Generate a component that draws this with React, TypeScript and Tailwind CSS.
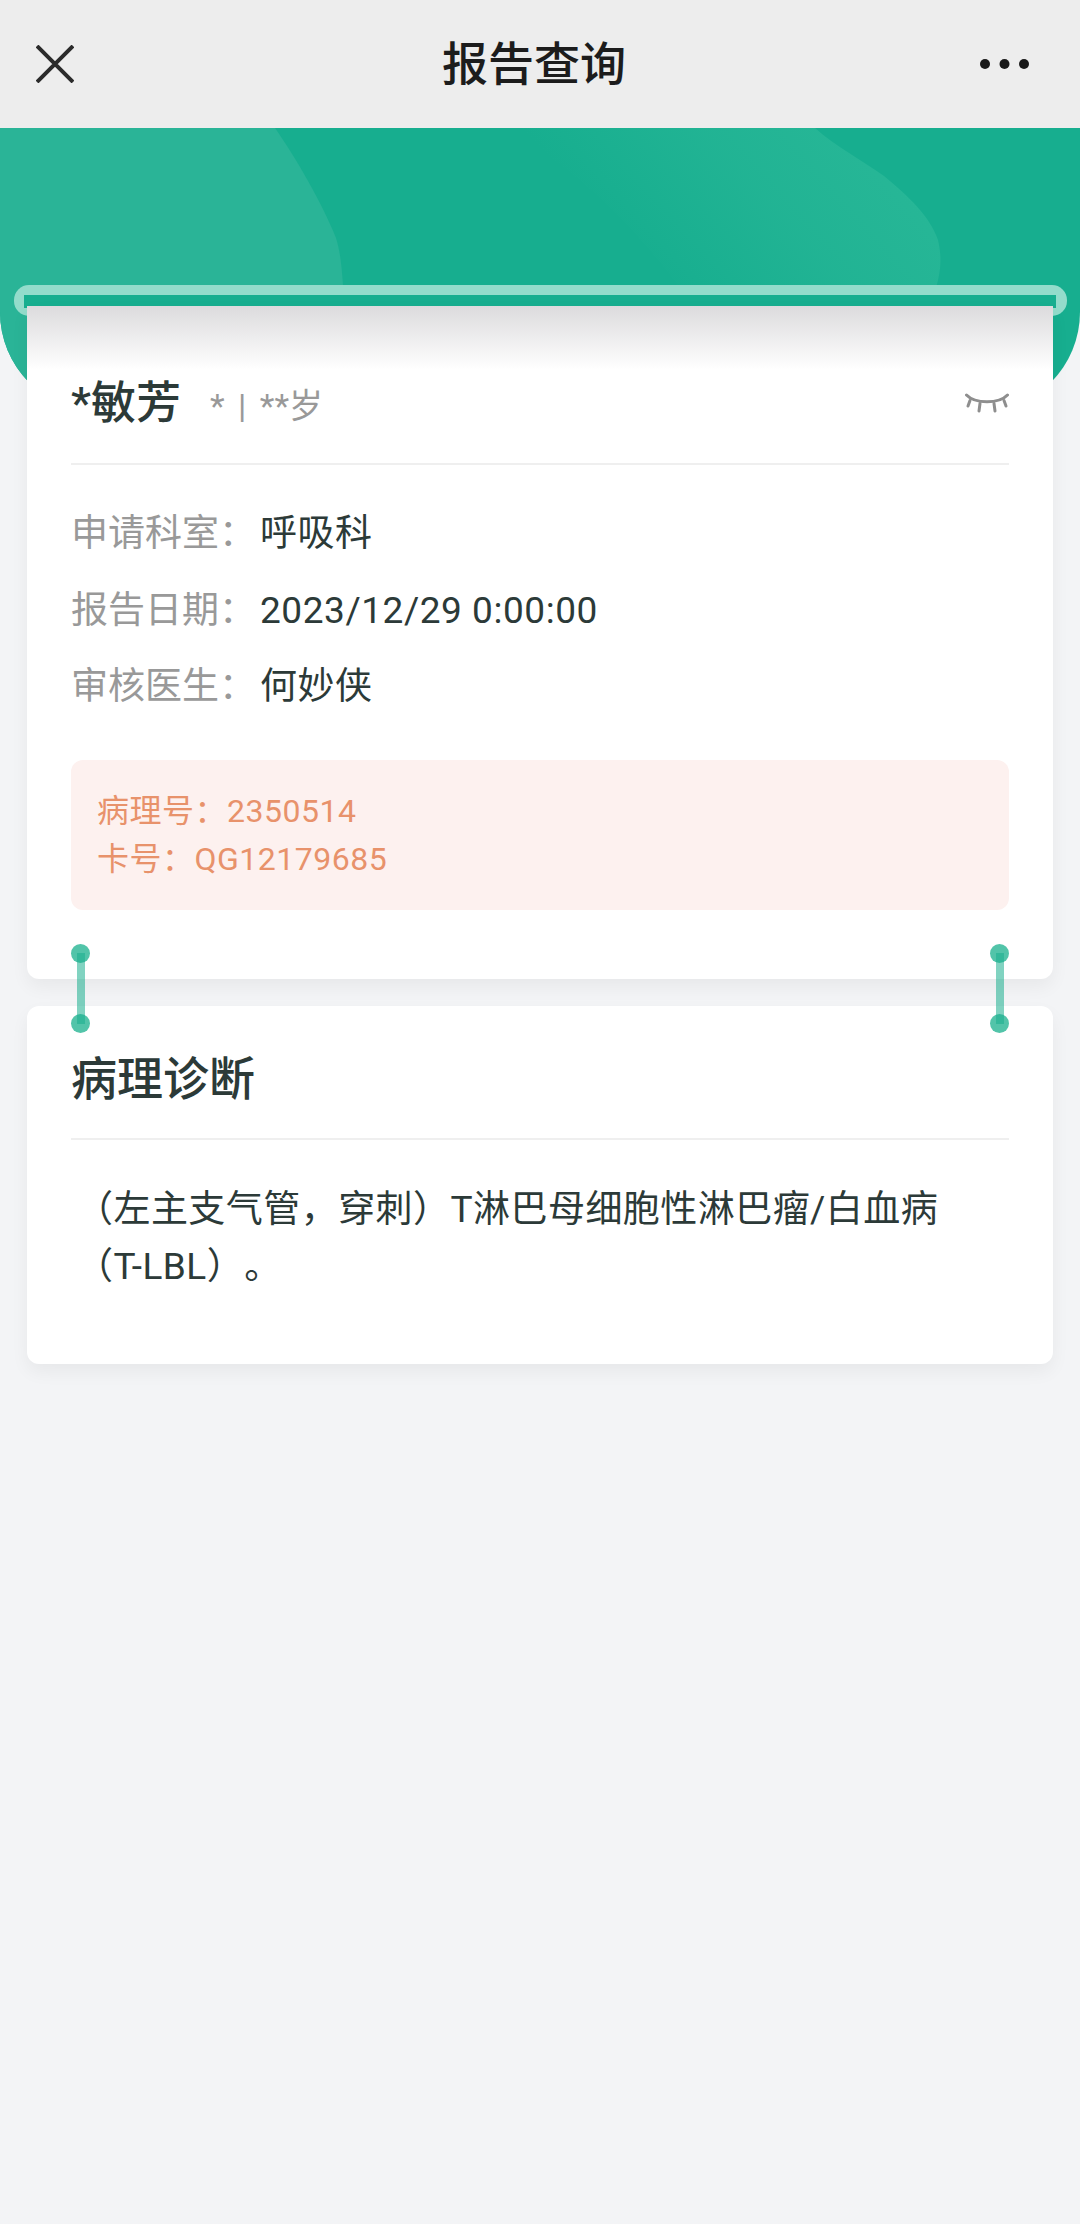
import React from 'react';

const infoRows = [
  { label: '申请科室：', value: '呼吸科' },
  { label: '报告日期：', value: '2023/12/29 0:00:00' },
  { label: '审核医生：', value: '何妙侠' },
];

const Connector: React.FC = () => (
  <div className="relative flex flex-col justify-between w-[19px] h-[89px]">
    <div className="w-[19px] h-[19px] rounded-full bg-[#52C4A9]" />
    <div className="w-[19px] h-[19px] rounded-full bg-[#52C4A9]" />
    <div className="absolute left-[6px] top-[9px] bottom-[9px] w-[8px] bg-[#1AAE8E]/55" />
  </div>
);

const App: React.FC = () => {
  return (
    <div className="min-h-[2224px] bg-[#F3F4F6] font-['Roboto','Noto_Sans_CJK_SC',sans-serif] text-[#2C3A38]">
      <header className="h-[128px] bg-[#EDEDED] flex items-center justify-between pl-[36px] pr-[51px]">
        <svg width="38" height="38" viewBox="0 0 38 38" fill="none" stroke="#2B2B2B" strokeWidth="4" className="-mt-[1px]">
          <path d="M1 1 L37 37 M37 1 L1 37" />
        </svg>
        <h1 className="text-[46px] leading-none font-medium text-[#1C1C1C] ml-[14px] -mt-[1px]">报告查询</h1>
        <svg width="49" height="10" viewBox="0 0 49 10" fill="#1A1A1A" className="-mt-[1px]">
          <circle cx="5" cy="5" r="5" />
          <circle cx="24.5" cy="5" r="5" />
          <circle cx="44" cy="5" r="5" />
        </svg>
      </header>

      <div className="relative h-[284px] bg-[#17AE8F] rounded-b-[100px] overflow-hidden">
        <svg className="absolute inset-0" width="1080" height="284" viewBox="0 0 1080 284">
          <defs>
            <linearGradient id="blobRight" gradientUnits="userSpaceOnUse" x1="640" y1="130" x2="840" y2="-53">
              <stop offset="0" stopColor="#28B797" stopOpacity="0" />
              <stop offset="0.5" stopColor="#28B797" stopOpacity="0.6" />
              <stop offset="1" stopColor="#28B797" stopOpacity="1" />
            </linearGradient>
          </defs>
          <path d="M0 0 L275 0 C296 30 322 75 336 110 C344 135 345 180 345 284 L0 284 Z" fill="#2AB497" />
          <path d="M500 0 L815 0 C835 18 865 34 884 48 C908 68 930 88 938 112 C942 130 941 142 936 160 L936 284 L760 284 C700 180 620 60 500 0 Z" fill="url(#blobRight)" />
        </svg>
        <div className="absolute left-[14px] right-[13px] top-[157px] h-[31px] rounded-[15px] bg-[#93DCCB]" />
        <div className="absolute left-[24px] right-[24px] top-[167px] h-[13px] bg-[#17AE8F]" />
      </div>

      <main className="relative -mt-[106px] mx-[27px] flex flex-col gap-[27px]">
        <section className="rounded-b-[12px] bg-white shadow-[0_8px_18px_rgba(0,0,0,0.05)] px-[44px] pt-[68px] pb-[69px] bg-[linear-gradient(to_bottom,#DCDBDD_0px,#FFFFFF_64px)]">
          <div className="flex items-center justify-between pb-[29px] border-b-2 border-[#EFEFEF]">
            <div className="flex items-center h-[60px]">
              <span className="text-[45px] leading-[60px] font-medium">*敏芳</span>
              <span className="text-[34px] text-[#999999] ml-[29px] mt-[4px] [word-spacing:5px]">* | **岁</span>
            </div>
            <svg width="44" height="22" viewBox="0 0 44 22" fill="none" stroke="#8E8E8E" strokeWidth="3" strokeLinecap="round" className="-mt-[1px]">
              <path d="M1.5 2 C10 11 34 11 42.5 2" />
              <path d="M5 7.5 L3 13 M15 10.5 L14 18 M29 10.5 L30 18 M39 7.5 L41 13" />
            </svg>
          </div>

          <div className="mt-[31px]">
            {infoRows.map(row => (
              <div key={row.label} className="flex text-[37px] leading-[76.5px]">
                <span className="w-[189px] text-[#999999]">{row.label}</span>
                <span className="tracking-[0.55px]">{row.value}</span>
              </div>
            ))}
          </div>

          <div className="mt-[34px] rounded-[12px] bg-[#FDF1EF] px-[26px] py-[27px] text-[32px] leading-[48px] tracking-[0.5px] text-[#E8926B]">
            <div>病理号：2350514</div>
            <div>卡号：QG12179685</div>
          </div>
        </section>

        <section className="relative rounded-[12px] bg-white shadow-[0_8px_18px_rgba(0,0,0,0.05)] px-[44px] pt-[43px] pb-[69px]">
          <div className="absolute top-[-62px] left-[44px] right-[44px] flex justify-between">
            <Connector />
            <Connector />
          </div>
          <h2 className="text-[46px] leading-[60px] font-medium pb-[29px] border-b-2 border-[#EFEFEF]">病理诊断</h2>
          <p className="mt-[41px] pl-[5px] pr-[50px] text-[37px] leading-[57px] tracking-[0.45px] [text-spacing-trim:space-all]">（左主支气管，穿刺）T淋巴母细胞性淋巴瘤/白血病（T-LBL）。</p>
        </section>
      </main>
    </div>
  );
};

export default App;
